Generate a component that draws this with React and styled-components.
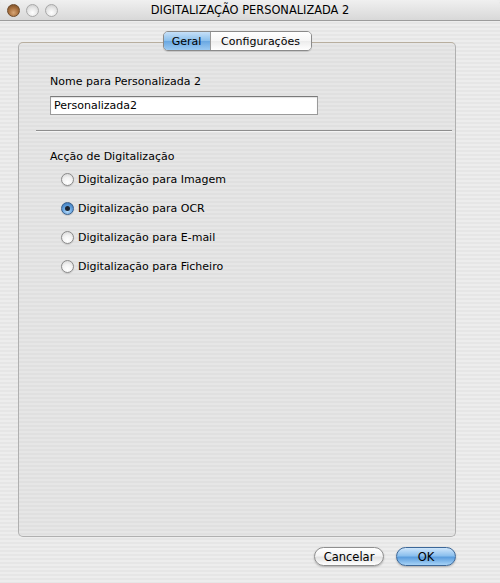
import React, { useState } from "react";
import styled, { createGlobalStyle } from "styled-components";

const Global = createGlobalStyle`
  html, body { margin: 0; padding: 0; }
  body { width: 500px; height: 583px; overflow: hidden; font-family: "DejaVu Sans", "Liberation Sans", sans-serif; }
`;

const stripes = `repeating-linear-gradient(to bottom, #ededed 0px, #ededed 2px, #e6e6e6 2px, #e6e6e6 4px)`;
const panelStripes = `repeating-linear-gradient(to bottom, #e6e6e6 0px, #e6e6e6 2px, #e0e0e0 2px, #e0e0e0 4px)`;

const Window = styled.div`
  width: 500px;
  height: 583px;
  display: flex;
  flex-direction: column;
  background: ${stripes};
`;

const TitleBar = styled.div`
  height: 20px;
  flex: none;
  display: flex;
  align-items: center;
  position: relative;
  background: linear-gradient(to bottom, #f0f0f0, #d8d8d8);
  border-bottom: 1px solid #9c9c9c;
  border-top-left-radius: 5px;
  border-top-right-radius: 5px;
`;

const Lights = styled.div`
  display: flex;
  gap: 6px;
  padding-left: 7px;
`;

const Light = styled.div`
  width: 13px;
  height: 13px;
  border-radius: 50%;
  box-sizing: border-box;
  border: 1px solid ${(p) => (p.$active ? "#6e4a2a" : "#a8a8a8")};
  background: ${(p) =>
    p.$active
      ? "radial-gradient(circle at 50% 70%, #d8a676 0%, #a8703e 50%, #6e4420 100%)"
      : "radial-gradient(circle at 50% 70%, #ffffff 0%, #e4e4e4 55%, #c4c4c4 100%)"};
`;

const Title = styled.div`
  position: absolute;
  left: 0;
  right: 0;
  text-align: center;
  font-size: 11.4px;
  color: #000;
  pointer-events: none;
`;

const Body = styled.div`
  flex: 1;
  display: flex;
  flex-direction: column;
  padding: 10px 44px 0 18px;
`;

const TabGroup = styled.div`
  display: flex;
  flex-direction: column;
`;

const TabRow = styled.div`
  display: flex;
  justify-content: center;
  position: relative;
  z-index: 2;
  margin-bottom: -9px;
`;

const Segmented = styled.div`
  display: flex;
  height: 18px;
  border: 1px solid #8a8a8a;
  border-radius: 5px;
  overflow: hidden;
  box-shadow: 0 1px 1px rgba(0, 0, 0, 0.15);
`;

const Tab = styled.div`
  display: flex;
  align-items: center;
  justify-content: center;
  width: ${(p) => p.$w}px;
  font-size: 11px;
  color: #000;
  background: ${(p) =>
    p.$selected
      ? "linear-gradient(to bottom, #c6e0f8 0%, #8cc0ec 48%, #6aa8e2 52%, #9ccaf2 100%)"
      : "linear-gradient(to bottom, #ffffff 0%, #f6f6f6 50%, #ececec 52%, #ffffff 100%)"};
  border-left: ${(p) => (p.$first ? "none" : "1px solid #9a9a9a")};
`;

const Panel = styled.div`
  height: 495px;
  box-sizing: border-box;
  border: 1px solid #b0b0b0;
  border-top-color: #b8ae9e;
  border-radius: 5px;
  background: ${panelStripes};
  padding: 31px 3px 0 17px;
  display: flex;
  flex-direction: column;
`;

const Section = styled.div`
  display: flex;
  flex-direction: column;
  padding-left: 14px;
`;

const Label = styled.div`
  font-size: 11px;
  line-height: 16px;
  color: #000;
`;

const TextInput = styled.input`
  margin-top: 6px;
  width: 268px;
  height: 19px;
  box-sizing: border-box;
  border: 1px solid #9a9a9a;
  border-top-color: #7a7a7a;
  box-shadow: inset 0 1px 1px rgba(0, 0, 0, 0.12);
  background: #fff;
  font-family: inherit;
  font-size: 11px;
  padding: 0 3px;
  color: #000;
  outline: none;
`;

const Separator = styled.div`
  height: 0;
  border-top: 1px solid #8e8e8e;
  border-bottom: 1px solid #f4f4f4;
  margin: 15px 0 17px;
`;

const RadioList = styled.div`
  display: flex;
  flex-direction: column;
  gap: 13px;
  margin-top: 6px;
  padding-left: 11px;
`;

const RadioRow = styled.label`
  display: flex;
  align-items: center;
  gap: 4px;
  height: 16px;
  font-size: 11px;
  color: #000;
  cursor: default;
`;

const RadioDot = styled.span`
  width: 13px;
  height: 13px;
  border-radius: 50%;
  box-sizing: border-box;
  flex: none;
  display: flex;
  align-items: center;
  justify-content: center;
  border: 1px solid ${(p) => (p.$checked ? "#3a5f8a" : "#8a8a8a")};
  background: ${(p) =>
    p.$checked
      ? "radial-gradient(circle at 50% 75%, #b8dcfa 0%, #6aa6e0 45%, #2f6db0 100%)"
      : "radial-gradient(circle at 50% 75%, #ffffff 0%, #f2f2f2 50%, #cfcfcf 100%)"};
  box-shadow: 0 1px 1px rgba(0, 0, 0, 0.12);
  &::after {
    content: "";
    width: 5px;
    height: 5px;
    border-radius: 50%;
    background: #1c2430;
    display: ${(p) => (p.$checked ? "block" : "none")};
  }
`;

const ButtonBar = styled.div`
  display: flex;
  justify-content: flex-end;
  gap: 12px;
  margin-top: 10px;
`;

const Button = styled.button`
  width: ${(p) => p.$w}px;
  height: 19px;
  border-radius: 10px;
  box-sizing: border-box;
  font-family: inherit;
  font-size: 11.5px;
  color: #000;
  padding: 0;
  border: 1px solid ${(p) => (p.$primary ? "#3c6798" : "#8e8e8e")};
  background: ${(p) =>
    p.$primary
      ? "linear-gradient(to bottom, #cfe6fb 0%, #8cc0ee 45%, #5c9ede 55%, #a6d2f6 100%)"
      : "linear-gradient(to bottom, #ffffff 0%, #f4f4f4 45%, #e2e2e2 55%, #ffffff 100%)"};
  box-shadow: 0 1px 2px rgba(0, 0, 0, 0.25);
`;

const options = [
  "Digitalização para Imagem",
  "Digitalização para OCR",
  "Digitalização para E-mail",
  "Digitalização para Ficheiro",
];

export default function App() {
  const [sel, setSel] = useState(1);
  return (
    <>
      <Global />
      <Window>
        <TitleBar>
          <Lights>
            <Light $active />
            <Light />
            <Light />
          </Lights>
          <Title>DIGITALIZAÇÃO PERSONALIZADA 2</Title>
        </TitleBar>
        <Body>
          <TabGroup>
            <TabRow>
              <Segmented>
                <Tab $selected $first $w={46}>Geral</Tab>
                <Tab $w={100}>Configurações</Tab>
              </Segmented>
            </TabRow>
            <Panel>
              <Section>
                <Label>Nome para Personalizada 2</Label>
                <TextInput defaultValue="Personalizada2" />
              </Section>
              <Separator />
              <Section>
                <Label>Acção de Digitalização</Label>
                <RadioList>
                  {options.map((o, i) => (
                    <RadioRow key={o} onClick={() => setSel(i)}>
                      <RadioDot $checked={sel === i} />
                      {o}
                    </RadioRow>
                  ))}
                </RadioList>
              </Section>
            </Panel>
          </TabGroup>
          <ButtonBar>
            <Button $w={70}>Cancelar</Button>
            <Button $primary $w={60}>OK</Button>
          </ButtonBar>
        </Body>
      </Window>
    </>
  );
}
